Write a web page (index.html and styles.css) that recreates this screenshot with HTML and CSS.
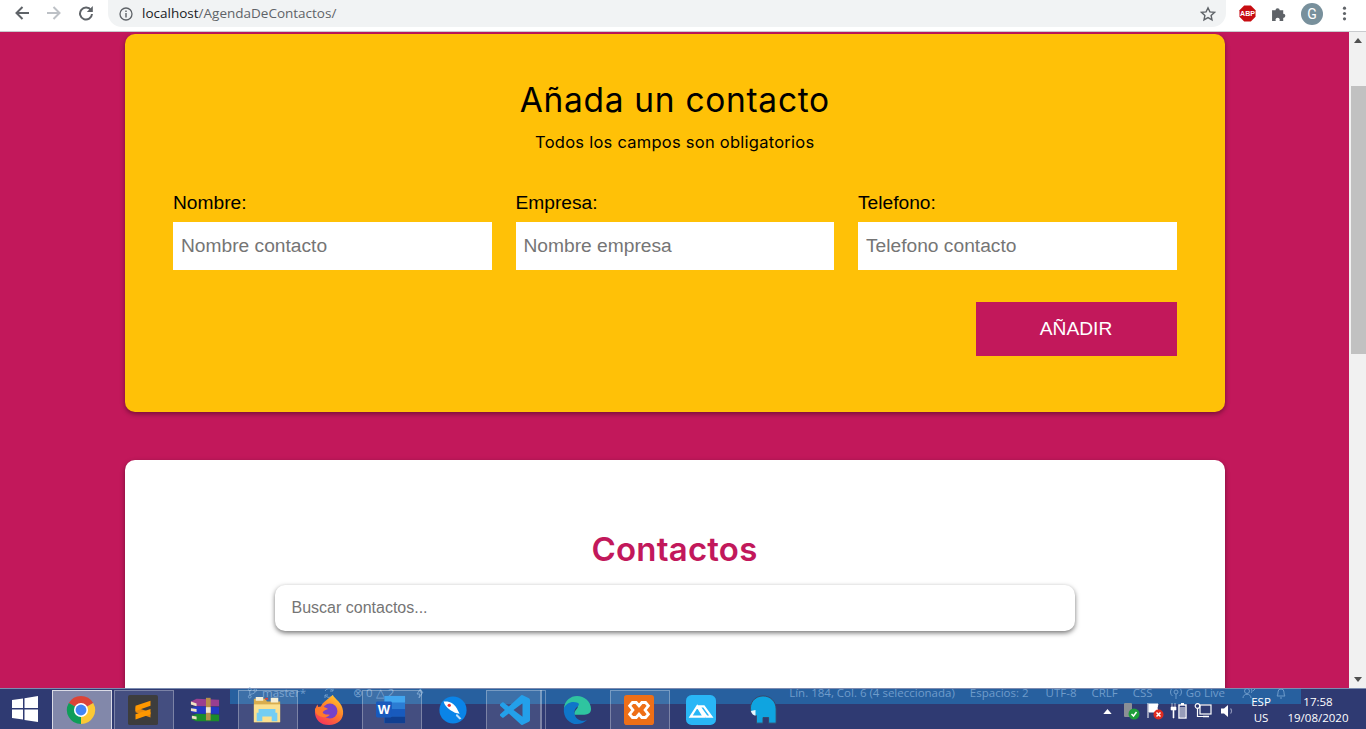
FILE: index.html
```html
<!DOCTYPE html>
<html lang="es">
<head>
    <meta charset="UTF-8">
    <meta name="viewport" content="width=device-width, initial-scale=1.0">
    <title>Agenda de Contactos</title>
    <link rel="stylesheet" href="styles.css">
</head>
<body>
    <!-- barra del navegador -->
    <header class="toolbar">
        <svg class="nav-icon" viewBox="0 0 16 16"><path d="M15 8H2.500M8.500 2L2.500 8l6 6" fill="none" stroke="#5f6368" stroke-width="2"/></svg>
        <svg class="nav-icon" viewBox="0 0 16 16"><path d="M1 8h12.500M7.500 2l6 6-6 6" fill="none" stroke="#bdc1c6" stroke-width="2"/></svg>
        <svg class="nav-icon" viewBox="0 0 16 16"><path d="M13 5.200A6 6 0 1 0 14 9" fill="none" stroke="#5f6368" stroke-width="2"/><path d="M14.800 1v6H8.800z" fill="#5f6368"/></svg>
        <div class="omnibox">
            <svg class="info-icon" viewBox="0 0 14 14"><circle cx="7" cy="7" r="6" fill="none" stroke="#5f6368" stroke-width="1.300"/><path d="M6.300 6h1.400v4.400H6.300zM6.300 3.500h1.400v1.400H6.300z" fill="#5f6368"/></svg>
            <span class="url"><b>localhost</b>/AgendaDeContactos/</span>
            <svg class="star-icon" viewBox="0 0 16 16"><path d="M8 1.800l1.900 4.100 4.500.5-3.300 3 .9 4.400L8 11.600l-4 2.200.9-4.400-3.300-3 4.500-.5z" fill="none" stroke="#5f6368" stroke-width="1.400"/></svg>
        </div>
        <div class="extensions">
            <svg class="ext" viewBox="0 0 18 18"><path d="M5.500 0.500h7l5 5v7l-5 5h-7l-5-5v-7z" fill="#c70d12"/><text x="9" y="12" text-anchor="middle" class="abp-text">ABP</text></svg>
            <svg class="ext ext-puzzle" viewBox="0 0 16 16"><path d="M1 5h3.200a2 2 0 1 1 4 0h3.300v3.200a2 2 0 1 1 0 4V15H8a2 2 0 1 0-3.500 0H1z" fill="#5f6368"/></svg>
            <div class="avatar">G</div>
            <svg class="ext" viewBox="0 0 16 16"><circle cx="8" cy="3" r="1.500" fill="#5f6368"/><circle cx="8" cy="8" r="1.500" fill="#5f6368"/><circle cx="8" cy="13" r="1.500" fill="#5f6368"/></svg>
        </div>
    </header>

    <div class="viewport">
        <main class="page">
            <section class="card card-form">
                <h1>Añada un contacto</h1>
                <p class="hint">Todos los campos son obligatorios</p>
                <form class="contact-form">
                    <div class="fields">
                        <div class="field">
                            <label for="nombre">Nombre:</label>
                            <input id="nombre" type="text" placeholder="Nombre contacto">
                        </div>
                        <div class="field">
                            <label for="empresa">Empresa:</label>
                            <input id="empresa" type="text" placeholder="Nombre empresa">
                        </div>
                        <div class="field">
                            <label for="telefono">Telefono:</label>
                            <input id="telefono" type="text" placeholder="Telefono contacto">
                        </div>
                    </div>
                    <div class="actions">
                        <button type="button" class="btn-add">AÑADIR</button>
                    </div>
                </form>
            </section>

            <section class="card card-list">
                <h2>Contactos</h2>
                <input class="search" type="text" placeholder="Buscar contactos...">
            </section>
        </main>
        <div class="scrollbar">
            <div class="arrow arrow-up"></div>
            <div class="thumb"></div>
            <div class="arrow arrow-down"></div>
        </div>
    </div>

    <!-- barra de tareas de windows -->
    <footer class="taskbar">
        <div class="status-strip">
            <svg class="st-icon st-git" viewBox="0 0 12 12"><circle cx="3" cy="2" r="1.500"/><circle cx="3" cy="10" r="1.500"/><circle cx="9" cy="3" r="1.500"/><path d="M3 3.500v5M9 4.500c0 3-6 2-6 4"/></svg>
            <span class="st-branch">master*</span>
            <svg class="st-icon st-sync" viewBox="0 0 12 12"><path d="M10 4A4.500 4.500 0 0 0 2 4M2 8a4.500 4.500 0 0 0 8 0M10 1v3H7M2 11V8h3"/></svg>
            <span class="st-errors">&#8855; 0 &#9651; 2</span>
            <svg class="st-icon st-bolt" viewBox="0 0 8 12"><path d="M5 1L1 7h3l-1 4 4-6H4z"/></svg>
            <div class="st-right">
                <span>Lín. 184, Col. 6 (4 seleccionada)</span>
                <span class="st-item">Espacios: 2</span>
                <span class="st-item st-wide">UTF-8</span>
                <span class="st-item">CRLF</span>
                <span class="st-item">CSS</span>
                <svg class="st-icon st-globe" viewBox="0 0 12 12"><circle cx="6" cy="5" r="2"/><path d="M2.500 9a5 5 0 0 1 0-8M9.500 9a5 5 0 0 0 0-8M6 7v5"/></svg>
                <span class="st-live">Go Live</span>
                <svg class="st-icon st-people" viewBox="0 0 14 12"><circle cx="5" cy="4" r="2.500"/><path d="M1 11c0-5 8-5 8 0M9 2a2.500 2.500 0 0 1 0 4M13 2l-2 2"/></svg>
                <svg class="st-icon st-bell" viewBox="0 0 10 12"><path d="M1 9c1-1 1-3 1-4a3 3 0 0 1 6 0c0 1 0 3 1 4zM4 11h2"/></svg>
            </div>
        </div>
        <div class="start">
            <svg viewBox="0 0 26 26" width="26" height="26"><path d="M0 4l11-1.600V12H0zM12.500 2.200L26 0v12H12.500zM0 13.500h11v10L0 22zM12.500 13.500H26V26l-13.500-2z" fill="#fff"/></svg>
        </div>
        <div class="task active">
            <svg viewBox="0 0 32 32"><path d="M16 16L3 8.500A15 15 0 0 1 29 8.500z" fill="#db4437"/><path d="M16 16L3 8.500A15 15 0 0 0 16 31z" fill="#0f9d58"/><path d="M16 16L29 8.500A15 15 0 0 1 16 31z" fill="#fcc934"/><circle cx="16" cy="16" r="7.500" fill="#fff"/><circle cx="16" cy="16" r="5.800" fill="#4285f4"/></svg>
        </div>
        <div class="task open">
            <svg viewBox="0 0 32 32"><rect width="32" height="32" rx="2" fill="#3d3d3d"/><path d="M8 13l16 5.500V24L8 18.500z" fill="#e88a0c"/><path d="M8 11.500L24 6v5.500L8 17zM8 20.500L24 15v5.500L8 26z" fill="#ff9800"/></svg>
        </div>
        <div class="task">
            <svg viewBox="0 0 32 32"><path d="M1 7l6-3 24 1v7H7L1 10z" fill="#9a3f90"/><path d="M1 7l6 2v3L1 10z" fill="#eee2c4"/><path d="M1 14l6-2 24 1v7H7l-6-2z" fill="#2338c4"/><path d="M1 14l6 1v3l-6-1z" fill="#eee2c4"/><path d="M2 22l5-2 24 1v7H7l-5-2z" fill="#1c8c2c"/><path d="M2 22l5 1v3l-5-1z" fill="#eee2c4"/><path d="M17 3h5v24h-5z" fill="#b88f4a"/><rect x="17" y="13" width="5" height="6" fill="#efe6d0"/></svg>
        </div>
        <div class="task open">
            <svg viewBox="0 0 32 32"><path d="M2 4h12l2 3h14v22H2z" fill="#d9ad4e"/><path d="M4 2h8v4H4zM20 3h8v5h-8z" fill="#f6efd6"/><path d="M14 3h3v2h-3z" fill="#d8453a"/><path d="M2 10h28v19H2z" fill="#fbe08f"/><path d="M7 15h18v4h2v9h-6v-5H11v5H5v-9h2z" fill="#74cdf3"/></svg>
        </div>
        <div class="task">
            <svg viewBox="0 0 32 32"><defs><linearGradient id="fox" x1="0.800" y1="0" x2="0.200" y2="1"><stop offset="0" stop-color="#ffcb2d"/><stop offset="0.500" stop-color="#ff7a2b"/><stop offset="1" stop-color="#f5315f"/></linearGradient></defs><path d="M20 0c3 5 10 8 11 17 1 9-6 15-15 15S1 26 1 18c0-3 1-6 3-8 0 3 1 4 3 5 0-6 6-9 13-15z" fill="url(#fox)"/><circle cx="17" cy="17" r="8" fill="#7542c9"/><path d="M1 15c4-4 10-3 14 0-3 1-5 2-6 4 2 2 5 2 8 2-4 5-16 3-16-6z" fill="#ff7a2b"/></svg>
        </div>
        <div class="task open">
            <svg viewBox="0 0 32 32"><path d="M9 1h22v29H9z" fill="#2b7cd3"/><path d="M9 1h22v7H9z" fill="#41a5ee"/><path d="M9 15h22v8H9z" fill="#185abd"/><path d="M9 23h22v7H9z" fill="#103f91"/><rect x="0" y="7" width="17" height="17" rx="1.500" fill="#185abd"/><text x="8.500" y="20.500" text-anchor="middle" class="word-text">W</text></svg>
        </div>
        <div class="task">
            <svg viewBox="0 0 32 32"><circle cx="16" cy="16" r="14.500" fill="#0a84e8"/><path d="M6 7c6-1 11 2 14 7l3 6-5-1-5-3C9 13 7 11 6 7z" fill="#fff"/><circle cx="12" cy="11" r="1.800" fill="#e33"/><path d="M20 20l5 5-2 1-4-4z" fill="#bfe0fa"/></svg>
        </div>
        <div class="task open narrow">
            <svg viewBox="0 0 24 24"><path d="M23.150 2.587L18.210.21a1.494 1.494 0 0 0-1.705.29l-9.460 8.630-4.120-3.128a.999.999 0 0 0-1.276.057L.327 7.261A1 1 0 0 0 .326 8.740L3.899 12 .326 15.260a1 1 0 0 0 .001 1.479L1.650 17.940a.999.999 0 0 0 1.276.057l4.120-3.128 9.460 8.630a1.492 1.492 0 0 0 1.704.29l4.942-2.377A1.500 1.500 0 0 0 24 20.060V3.939a1.500 1.500 0 0 0-.85-1.352zm-5.146 14.861L10.826 12l7.178-5.448v10.896z" fill="#23a0ea"/></svg>
        </div>
        <div class="task">
            <svg viewBox="0 0 32 32"><path d="M2 14C3 6 9 1 16 1c8 0 15 6 15 14 0 4-3 6-7 6H13c0-5 4-6 4-9-7-2-12 0-15 2z" fill="#2fc4a0"/><path d="M2 14c2-5 8-8 14-6 3 1 2 3 1 4-3 2-5 6-3 10 2 5 9 7 13 4-3 3-7 5-11 5C8 31 1 24 2 14z" fill="#0f76c9"/></svg>
        </div>
        <div class="task open">
            <svg viewBox="0 0 32 32"><rect width="32" height="32" rx="3" fill="#ee6f17"/><path d="M9 8h4l3 3.500L19 8h4l3 3.500-3.500 4.500 3.500 4.500L23 24h-4l-3-3.500-3 3.500H9l-3-3.500L9.500 16 6 11.500z" fill="none" stroke="#fff" stroke-width="3"/></svg>
        </div>
        <div class="task">
            <svg viewBox="0 0 32 32"><rect width="32" height="32" rx="6" fill="#29b6f6"/><path d="M5 23l7-11 7 11zM14 12h5l8 11h-5z" fill="none" stroke="#fff" stroke-width="2.400"/></svg>
        </div>
        <div class="task">
            <svg viewBox="0 0 32 32"><path d="M16 1c8 0 14 6 14 14v15h-8v-6h-6v6H9v-8c-2 0-5-2-6-5C1 9 7 1 16 1z" fill="#0fa4e0" stroke="#3a4668"/><path d="M3 17c1 3 3 5 5 5v-6z" fill="#e8f6fc"/></svg>
        </div>

        <div class="tray">
            <div class="tray-slot"><svg viewBox="0 0 10 6" width="9" height="5"><path d="M5 0l5 6H0z" fill="#fff"/></svg></div>
            <div class="tray-slot">
                <svg viewBox="0 0 18 18" width="18" height="18"><rect x="2" y="1" width="8" height="14" rx="1" fill="#8a8f96"/><circle cx="12" cy="12" r="5.500" fill="#1e9e3a"/><path d="M9.500 12l2 2 3-4" fill="none" stroke="#fff" stroke-width="1.500"/></svg>
            </div>
            <div class="tray-slot">
                <svg viewBox="0 0 18 18" width="18" height="18"><path d="M2 1v15M3 2h9l-1 4 1 4H3z" fill="#fff" stroke="#fff"/><circle cx="12.500" cy="12.500" r="5" fill="#e02b20"/><path d="M10.500 10.500l4 4M14.500 10.500l-4 4" stroke="#fff" stroke-width="1.500"/></svg>
            </div>
            <div class="tray-slot">
                <svg viewBox="0 0 18 18" width="18" height="18"><path d="M2 1v4M5 1v4M1 5h5v3H4v8H3V8H1z" fill="#fff" stroke="#fff" stroke-width=".6"/><rect x="9" y="3" width="7" height="13" fill="none" stroke="#fff" stroke-width="1.400"/><path d="M11 1h3v2h-3z" fill="#fff"/><path d="M10 5h5v10h-5z" fill="#fff" opacity=".5"/></svg>
            </div>
            <div class="tray-slot">
                <svg viewBox="0 0 18 18" width="18" height="18"><rect x="6" y="3" width="11" height="9" fill="none" stroke="#fff" stroke-width="1.200"/><path d="M9 14.500h6" stroke="#fff" stroke-width="1.500"/><circle cx="3.500" cy="4" r="2.300" fill="none" stroke="#fff" stroke-width="1.200"/><path d="M3.500 6.500v8H10" fill="none" stroke="#fff" stroke-width="1.200"/></svg>
            </div>
            <div class="tray-slot">
                <svg viewBox="0 0 18 18" width="18" height="18"><path d="M3 6.500h3L10 3v12l-4-3.500H3z" fill="#fff"/><path d="M12.500 6.500a3.500 3.500 0 0 1 0 5" fill="none" stroke="#8d95b8" stroke-width="1.200"/></svg>
            </div>
            <div class="lang"><span>ESP</span><span>US</span></div>
            <div class="clock"><span>17:58</span><span>19/08/2020</span></div>
        </div>
    </footer>
</body>
</html>
```

FILE: styles.css
```css
* {
    box-sizing: border-box;
}
html, body {
    margin: 0;
    padding: 0;
    height: 729px;
    overflow: hidden;
}
body {
    display: flex;
    flex-direction: column;
    font-family: 'Liberation Sans', Arial, sans-serif;
    background-color: #c2185b;
}

/* navegador */
.toolbar {
    height: 32px;
    flex: none;
    display: flex;
    align-items: flex-start;
    background-color: #fff;
    border-bottom: 1px solid #c9cbce;
    padding-left: 6px;
}
.nav-icon {
    width: 16px;
    height: 16px;
    flex: none;
    margin: 5px 8px 0 8px;
}
.omnibox {
    width: 1118px;
    height: 27px;
    flex: none;
    margin-left: 6px;
    padding: 0 10px 0 11px;
    display: flex;
    align-items: center;
    background-color: #f1f3f4;
    border-radius: 0 0 14px 14px;
}
.info-icon {
    width: 14px;
    height: 14px;
}
.url {
    margin-left: 9px;
    padding-bottom: 1px;
    font-family: 'Open Sans', sans-serif;
    font-size: 13.500px;
    color: #5f6368;
    white-space: nowrap;
}
.url b {
    font-weight: 400;
    color: #202124;
}
.star-icon {
    width: 16px;
    height: 16px;
    margin-left: auto;
}
.extensions {
    display: flex;
    align-items: center;
    flex: none;
    height: 27px;
    padding-left: 13px;
}
.ext {
    width: 17px;
    height: 17px;
    margin-right: 15px;
}
.ext-puzzle {
    margin-right: 13px;
}
.abp-text {
    font-family: 'Liberation Sans', sans-serif;
    font-size: 7.500px;
    font-weight: 700;
    fill: #fff;
}
.avatar {
    width: 22px;
    height: 22px;
    margin-right: 13px;
    border-radius: 50%;
    background-color: #78909c;
    color: #fff;
    font-family: 'Roboto', sans-serif;
    font-size: 14px;
    line-height: 22px;
    text-align: center;
}

/* pagina */
.viewport {
    height: 656px;
    flex: none;
    display: flex;
    overflow: hidden;
}
.page {
    width: 1349px;
    flex: none;
    padding-top: 2px;
}
.card {
    width: 1100px;
    margin: 0 auto;
    border-radius: 10px;
    box-shadow: 0 2px 5px rgba(0,0,0,0.4);
}
.card-form {
    height: 378px;
    margin-bottom: 48px;
    padding: 46px 48px 0 48.500px;
    background-color: #ffc107;
}
h1 {
    margin: 0;
    font-family: 'Inter', sans-serif;
    font-size: 33.500px;
    font-weight: 400;
    letter-spacing: 0.7px;
    line-height: 40px;
    text-align: center;
    color: #000;
}
.hint {
    margin: 10px 0 0;
    font-family: 'Inter', sans-serif;
    font-size: 16.500px;
    letter-spacing: 0.25px;
    line-height: 24px;
    text-align: center;
    color: #000;
}
.contact-form {
    margin-top: 36px;
}
.fields {
    display: grid;
    grid-template-columns: repeat(3, 1fr);
    column-gap: 24px;
}
.field label {
    display: block;
    height: 26px;
    font-size: 19.200px;
    line-height: 26px;
    color: #000;
}
.field input {
    display: block;
    width: 100%;
    height: 48px;
    margin-top: 6px;
    padding: 0 8px;
    border: none;
    background-color: #fff;
    font-family: 'Liberation Sans', sans-serif;
    font-size: 19.200px;
}
.field input::placeholder {
    color: #757575;
}
.actions {
    display: flex;
    justify-content: flex-end;
    margin-top: 32px;
}
.btn-add {
    width: 201px;
    height: 54px;
    border: none;
    background-color: #c2185b;
    color: #fff;
    font-family: 'Liberation Sans', sans-serif;
    font-size: 19.200px;
}
.card-list {
    height: 400px;
    padding-top: 68px;
    background-color: #fff;
}
h2 {
    margin: 0;
    font-family: 'Inter', sans-serif;
    font-size: 33px;
    font-weight: 600;
    letter-spacing: 0.2px;
    line-height: 42px;
    text-align: center;
    color: #c2185b;
}
.search {
    display: block;
    width: 800px;
    height: 46px;
    margin: 15px auto 0;
    padding: 0 17px;
    border: none;
    border-radius: 10px;
    background-color: #fff;
    box-shadow: 0 2px 5px rgba(0,0,0,0.55);
    font-family: 'Liberation Sans', sans-serif;
    font-size: 16px;
}
.search::placeholder {
    color: #757575;
}

/* scroll */
.scrollbar {
    width: 17px;
    flex: none;
    display: flex;
    flex-direction: column;
    background-color: #f1f1f1;
}
.arrow {
    height: 17px;
    flex: none;
    display: flex;
    align-items: center;
    justify-content: center;
}
.arrow::before {
    content: "";
    border-left: 4px solid transparent;
    border-right: 4px solid transparent;
}
.arrow-up::before {
    border-bottom: 5px solid #505050;
}
.arrow-down {
    margin-top: auto;
}
.arrow-down::before {
    border-top: 5px solid #505050;
}
.thumb {
    height: 268px;
    margin: 37px 0 0 2px;
    background-color: #c1c1c1;
}

/* barra de tareas */
.taskbar {
    position: relative;
    height: 41px;
    flex: none;
    display: flex;
    align-items: flex-end;
    background-color: #2f3a72;
    border-top: 1px solid #7d8cb0;
    color: #fff;
}
.status-strip {
    position: absolute;
    left: 230px;
    top: 0;
    width: 1071px;
    height: 15px;
    padding-bottom: 7px;
    display: flex;
    align-items: center;
    background-color: #27609f;
    color: #6f9ccb;
    font-family: 'Open Sans', sans-serif;
    font-size: 11.500px;
    line-height: 12px;
    white-space: nowrap;
}
.st-icon {
    flex: none;
    height: 12px;
    fill: none;
    stroke: #6f9ccb;
    stroke-width: 1;
}
.st-git {
    width: 11px;
    margin-left: 17px;
}
.st-branch {
    margin-left: 4px;
}
.st-sync {
    width: 12px;
    margin-left: 17px;
}
.st-errors {
    margin-left: 18px;
}
.st-bolt {
    width: 8px;
    margin-left: 22px;
}
.st-right {
    margin-left: auto;
    padding-right: 15px;
    display: flex;
    align-items: center;
}
.st-item {
    margin-left: 15px;
}
.st-wide {
    margin-left: 17px;
}
.st-globe {
    width: 12px;
    margin-left: 17px;
}
.st-live {
    margin-left: 4px;
}
.st-people {
    width: 14px;
    margin-left: 17px;
}
.st-bell {
    width: 10px;
    margin-left: 20px;
}
.start {
    width: 50px;
    height: 40px;
    flex: none;
    padding: 7px 0 0 12px;
}
.task {
    position: relative;
    width: 62px;
    height: 40px;
    flex: none;
    display: flex;
    align-items: center;
    justify-content: center;
    padding-top: 1px;
}
.task svg {
    position: relative;
    width: 30px;
    height: 30px;
}
.word-text {
    font-family: 'Liberation Sans', sans-serif;
    font-size: 14px;
    font-weight: 700;
    fill: #fff;
}
.task.open::before,
.task.active::before {
    content: "";
    position: absolute;
    top: 1px;
    left: 2px;
    width: 58px;
    height: 38px;
    border: 1px solid rgba(255,255,255,0.3);
    background-color: rgba(255,255,255,0.1);
}
.task.active::before {
    border-color: rgba(255,255,255,0.7);
    background-color: rgba(255,255,255,0.4);
}
.task.narrow::before {
    width: 54px;
}
.task.narrow::after {
    content: "";
    position: absolute;
    top: 1px;
    left: 56px;
    width: 4px;
    height: 38px;
    border: 1px solid rgba(255,255,255,0.3);
}
.tray {
    position: relative;
    height: 40px;
    margin-left: auto;
    display: flex;
    align-items: center;
    padding-right: 14px;
    font-family: 'Open Sans', sans-serif;
    font-size: 11.500px;
}
.tray-slot {
    width: 24px;
    height: 40px;
    display: flex;
    align-items: center;
    justify-content: center;
    padding-top: 4px;
}
.lang {
    width: 42px;
    margin-left: 1px;
    padding-top: 2px;
    display: flex;
    flex-direction: column;
    align-items: center;
    line-height: 16px;
}
.clock {
    width: 68px;
    margin-left: 2px;
    padding-top: 2px;
    display: flex;
    flex-direction: column;
    align-items: center;
    line-height: 16px;
}
```
